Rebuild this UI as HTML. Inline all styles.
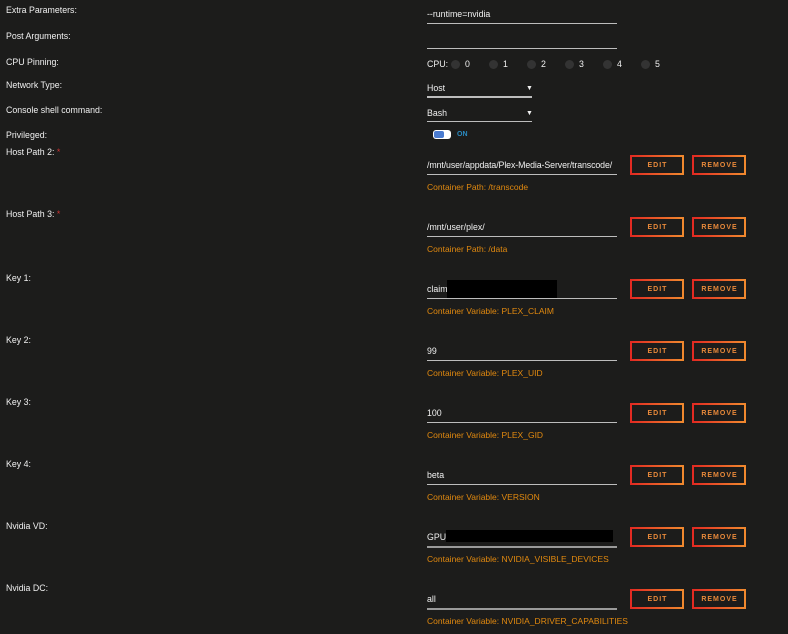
<!DOCTYPE html>
<html><head><meta charset="utf-8"><style>
*{margin:0;padding:0;box-sizing:border-box}
body{width:788px;height:634px;background:#1c1c1b;font-family:"Liberation Sans",sans-serif;color:#f0f0f0;position:relative;overflow:hidden;font-size:8.8px}
.a{position:absolute;white-space:nowrap;line-height:11px}
.req{color:#c33}
.ul{position:absolute;left:427px;width:190px;height:1px;background:#bdbdbd}
.ul2{height:2px;background:#9a9a9a}
.btn{position:absolute;width:54px;height:20px;border:2px solid;border-image:linear-gradient(90deg,#e22a22,#f0892e) 1;color:#e8893a;font-size:7px;font-weight:bold;letter-spacing:1px;display:flex;align-items:center;justify-content:center;line-height:1;padding-left:1px}
.cp{color:#e1890f;font-size:8.5px}
.dot{position:absolute;width:9px;height:9px;border-radius:50%;background:#333}
.blk{position:absolute;background:#000}
</style></head><body>
<div class="a" style="left:6px;top:5px">Extra Parameters:</div>
<div class="a" style="left:427px;top:9px">--runtime=nvidia</div>
<div class="ul" style="top:23px"></div>
<div class="a" style="left:6px;top:31px">Post Arguments:</div>
<div class="ul" style="top:48px"></div>
<div class="a" style="left:6px;top:57px">CPU Pinning:</div>
<div class="a" style="left:427px;top:59px">CPU:</div>
<div class="dot" style="left:451px;top:60px"></div><div class="a" style="left:465px;top:59px">0</div>
<div class="dot" style="left:489px;top:60px"></div><div class="a" style="left:503px;top:59px">1</div>
<div class="dot" style="left:527px;top:60px"></div><div class="a" style="left:541px;top:59px">2</div>
<div class="dot" style="left:565px;top:60px"></div><div class="a" style="left:579px;top:59px">3</div>
<div class="dot" style="left:603px;top:60px"></div><div class="a" style="left:617px;top:59px">4</div>
<div class="dot" style="left:641px;top:60px"></div><div class="a" style="left:655px;top:59px">5</div>
<div class="a" style="left:6px;top:80px">Network Type:</div>
<div class="a" style="left:427px;top:83px">Host</div><div class="a" style="left:526px;top:83px;font-size:7px">▼</div>
<div class="ul" style="left:427px;width:105px;top:96px;height:2px"></div>
<div class="a" style="left:6px;top:105px">Console shell command:</div>
<div class="a" style="left:427px;top:108px">Bash</div><div class="a" style="left:526px;top:108px;font-size:7px">▼</div>
<div class="ul" style="left:427px;width:105px;top:121px"></div>
<div class="a" style="left:6px;top:130px">Privileged:</div>
<div style="position:absolute;left:433px;top:130px;width:18px;height:9px;border-radius:3px;background:#fff"></div>
<div style="position:absolute;left:434px;top:131px;width:10px;height:7px;border-radius:2px;background:#4a7bd0"></div>
<div class="a" style="left:457px;top:129px;color:#2a8ac0;font-size:7px;font-weight:bold">ON</div>

<div class="a" style="left:6px;top:147px">Host Path 2: <span class="req">*</span></div>
<div class="a" style="left:427px;top:160px;letter-spacing:-0.1px">/mnt/user/appdata/Plex-Media-Server/transcode/</div>
<div class="ul" style="top:174px"></div>
<div class="btn" style="left:630px;top:155px">EDIT</div><div class="btn" style="left:692px;top:155px">REMOVE</div>
<div class="a cp" style="left:427px;top:182px">Container Path: /transcode</div>

<div class="a" style="left:6px;top:209px">Host Path 3: <span class="req">*</span></div>
<div class="a" style="left:427px;top:222px">/mnt/user/plex/</div>
<div class="ul" style="top:236px"></div>
<div class="btn" style="left:630px;top:217px">EDIT</div><div class="btn" style="left:692px;top:217px">REMOVE</div>
<div class="a cp" style="left:427px;top:244px">Container Path: /data</div>

<div class="a" style="left:6px;top:273px">Key 1:</div>
<div class="a" style="left:427px;top:284px">claim</div><div class="blk" style="left:447px;top:280px;width:110px;height:18px"></div>
<div class="ul" style="top:298px"></div>
<div class="btn" style="left:630px;top:279px">EDIT</div><div class="btn" style="left:692px;top:279px">REMOVE</div>
<div class="a cp" style="left:427px;top:306px">Container Variable: PLEX_CLAIM</div>

<div class="a" style="left:6px;top:335px">Key 2:</div>
<div class="a" style="left:427px;top:346px">99</div>
<div class="ul" style="top:360px"></div>
<div class="btn" style="left:630px;top:341px">EDIT</div><div class="btn" style="left:692px;top:341px">REMOVE</div>
<div class="a cp" style="left:427px;top:368px">Container Variable: PLEX_UID</div>

<div class="a" style="left:6px;top:397px">Key 3:</div>
<div class="a" style="left:427px;top:408px">100</div>
<div class="ul" style="top:422px"></div>
<div class="btn" style="left:630px;top:403px">EDIT</div><div class="btn" style="left:692px;top:403px">REMOVE</div>
<div class="a cp" style="left:427px;top:430px">Container Variable: PLEX_GID</div>

<div class="a" style="left:6px;top:459px">Key 4:</div>
<div class="a" style="left:427px;top:470px">beta</div>
<div class="ul" style="top:484px"></div>
<div class="btn" style="left:630px;top:465px">EDIT</div><div class="btn" style="left:692px;top:465px">REMOVE</div>
<div class="a cp" style="left:427px;top:492px">Container Variable: VERSION</div>

<div class="a" style="left:6px;top:521px">Nvidia VD:</div>
<div class="a" style="left:427px;top:532px">GPU-</div><div class="blk" style="left:446px;top:530px;width:167px;height:12px"></div>
<div class="ul ul2" style="top:546px"></div>
<div class="btn" style="left:630px;top:527px">EDIT</div><div class="btn" style="left:692px;top:527px">REMOVE</div>
<div class="a cp" style="left:427px;top:554px">Container Variable: NVIDIA_VISIBLE_DEVICES</div>

<div class="a" style="left:6px;top:583px">Nvidia DC:</div>
<div class="a" style="left:427px;top:594px">all</div>
<div class="ul ul2" style="top:608px"></div>
<div class="btn" style="left:630px;top:589px">EDIT</div><div class="btn" style="left:692px;top:589px">REMOVE</div>
<div class="a cp" style="left:427px;top:616px">Container Variable: NVIDIA_DRIVER_CAPABILITIES</div>
</body></html>
